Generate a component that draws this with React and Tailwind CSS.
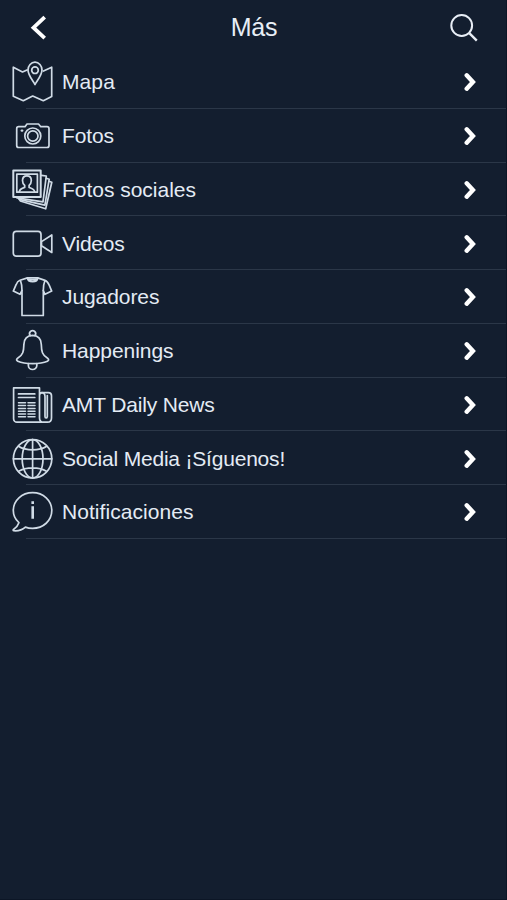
const stroke = {
  fill: 'none',
  stroke: 'currentColor',
  strokeWidth: 1.7,
  strokeLinejoin: 'round',
  strokeLinecap: 'round',
};

function Icon({ children }) {
  return (
    <svg viewBox="0 0 40 40" className="size-10 shrink-0 overflow-visible text-[#d0dbe6]" {...stroke} aria-hidden="true">
      {children}
    </svg>
  );
}

const MapIcon = () => (
  <Icon>
    <path d="M15 8 10.5 10 1.3 5.2V34.3L11.3 38.7 20.7 34 31.3 38.7 39.7 34.5V5.2L31.5 9" />
    <path d="M23 22.500c-2.300-4-7-9.500-7-14.500a7 7.800 0 0 1 14 0c0 5-4.700 10.500-7 14.500Z" />
    <circle cx="23" cy="8.200" r="3.300" />
  </Icon>
);

const CameraIcon = () => (
  <Icon>
    <path d="M6.700 10.700H13l2-2.700h11.500l2.300 2.700H35a2 2 0 0 1 2 2V29.500a2 2 0 0 1-2 2H6.700a2 2 0 0 1-2-2V12.700a2 2 0 0 1 2-2Z" />
    <circle cx="20.800" cy="20" r="8" />
    <circle cx="20.800" cy="20" r="5.200" />
    <path d="M9.800 14.600h.4" strokeWidth="2.400" />
  </Icon>
);

const SocialPhotosIcon = () => (
  <Icon>
    <path strokeWidth="2" d="M1.300.6H28.700V27H1.300Z" />
    <path d="M4.800 4.200H25.400V22.200H4.800Z" />
    <path d="M7.300 21.800c.3-3 2.800-3.500 5.400-4.400v-2c-1.500-1.400-2.200-3.200-2.200-5 0-2.800 1.800-4.500 4.400-4.500s4.400 1.700 4.400 4.500c0 1.800-.7 3.600-2.200 5v2c2.500.9 5.200 1.400 5.500 4.400" />
    <path d="M29.500 5.300 34.300 6 31 31.800 5 27.800" />
    <path d="M34.300 8.300 37.200 9.200 32.900 35.200 7 29.300" />
    <path d="M37 11.300 39.800 12.200 33.700 38.800 8.300 31 7.500 29" />
  </Icon>
);

const VideoIcon = () => (
  <Icon>
    <rect x="1.300" y="7.400" width="27.700" height="24.800" rx="3" />
    <path d="M29.500 17.600 39.800 11V28.500L29.500 21.700Z" />
  </Icon>
);

const ShirtIcon = () => (
  <Icon>
    <path d="M15.500.9h10.200l7.300 2.500c2.500.9 3.300 2.500 4.200 4.800l2.500 5.900-6.700 3.200-1.700-3.800V38.500H10V13.500l-2 3.800L1.300 14.100l2.800-6.400C5 5.300 6 4 8 3.300Z" />
    <path d="M15.500.9c.3 5 10 5 10.200 0M16 1.700c2.500 1.200 7 1.200 9.200 0M10 13.500c0-3 0-6-1.400-9.500M31.300 13.500c0-3 0-6 1.500-9.500" />
  </Icon>
);

const BellIcon = () => (
  <Icon>
    <path d="M18.300 4.600a3 3 0 1 1 4.600 0" />
    <path d="M20.600 4.400c-5.300.2-8.500 3.400-8.700 9-.2 7-.8 10.600-6.300 13.900-1.500 1.100-1.300 2.200.2 2.900 7 3.200 22.600 3.200 29.600 0 1.500-.7 1.700-1.800.2-2.900-5.500-3.300-6.100-6.900-6.300-13.900-.2-5.600-3.400-8.800-8.700-9Z" />
    <path d="M16.400 32.500v2.200a4.200 3.800 0 0 0 8.400 0v-2.200" />
  </Icon>
);

const NewsIcon = () => (
  <Icon>
    <path d="M34 37.200H5a3.400 3.400 0 0 1-3.400-3.400V2.900H27.500V33c0 2.500 1.700 4.200 4 4.200M27.500 10.500c0-2 1-2.800 2.800-2.800h6c2 0 3.200 1 3.200 3V33c0 2.500-1.500 4.200-4 4.200h-4" />
    <path d="M29.500 7.700c2.500 0 3.500 1.400 3.500 4V31.500c0 2 2 2 2.300 0V10.500" />
    <path d="M6.500 8.900H22.800M6.500 12.500H22.800" />
    <path strokeWidth="1.500" d="M6.500 17.800h7M6.500 20.600h7M6.500 23.400h7M6.500 26.200h7M6.500 29h7M6.500 31.800h7M16 17.800h7M16 20.600h7M16 23.400h7M16 26.200h7M16 29h7M16 31.800h7" />
  </Icon>
);

const GlobeIcon = () => (
  <Icon>
    <circle cx="20.600" cy="19.800" r="19.200" />
    <ellipse cx="20.600" cy="19.800" rx="10.400" ry="19.200" />
    <path d="M20.600.6V39M1.400 19.800H39.800M6.500 7.200c7.500 4.800 20.700 4.800 28.200 0M6.500 32.400c7.500-4.800 20.700-4.800 28.200 0" />
  </Icon>
);

const InfoIcon = () => (
  <Icon>
    <path d="M6.900 30.700C3.300 27.500 1.300 23.300 1.300 18.600 1.300 8.600 9.900.7 20.600.7s19.200 7.900 19.200 17.900-8.600 17.800-19.200 17.800c-2.500 0-5-.4-7.200-1.300-3 2.600-7.300 4-11.600 3.600-.7-.1-.8-.8-.3-1.200C3.900 35.800 6 33.500 6.900 30.700Z" />
    <path strokeLinecap="butt" strokeWidth="2.600" d="M20.700 9.300v2.800M20.700 14.300V26.800" />
  </Icon>
);

const items = [
  { label: 'Mapa', icon: MapIcon, tracking: 'tracking-[0.1px]' },
  { label: 'Fotos', icon: CameraIcon, tracking: 'tracking-[-0.1px]' },
  { label: 'Fotos sociales', icon: SocialPhotosIcon, tracking: 'tracking-[-0.02px]' },
  { label: 'Videos', icon: VideoIcon, tracking: 'tracking-[-0.2px]' },
  { label: 'Jugadores', icon: ShirtIcon, tracking: 'tracking-[-0.08px]' },
  { label: 'Happenings', icon: BellIcon, tracking: 'tracking-[-0.06px]' },
  { label: 'AMT Daily News', icon: NewsIcon, tracking: 'tracking-[-0.15px]' },
  { label: 'Social Media ¡Síguenos!', icon: GlobeIcon, tracking: 'tracking-[-0.2px]' },
  { label: 'Notificaciones', icon: InfoIcon, tracking: 'tracking-[0.05px]' },
];

function Chevron() {
  return (
    <svg viewBox="0 0 12 20" className="h-5 w-3 shrink-0 text-white" fill="none" stroke="currentColor" strokeWidth="4.400" strokeLinecap="round" aria-hidden="true">
      <path d="M2.700 3.300 8.900 10 2.700 16.700" />
    </svg>
  );
}

function Row({ label, icon: Glyph, tracking }) {
  return (
    <li className="flex h-[53.75px] flex-col">
      <a className="flex min-h-0 flex-1 items-center pl-3 pr-[30px] pt-[1.5px]">
        <Glyph />
        <span className={`ml-2.5 flex-1 whitespace-nowrap text-[21px] leading-6 text-[#e4ebf4] ${tracking}`}>{label}</span>
        <Chevron />
      </a>
      <div className="ml-[26px] h-px shrink-0 bg-[#2b3748]" />
    </li>
  );
}

export default function App() {
  return (
    <main className="flex h-[900px] w-[507px] flex-col overflow-hidden border-b border-r border-[#0c1626] bg-[#131e2f] font-['Liberation_Sans',Arial,sans-serif]">
      <header className="grid h-[55.200px] shrink-0 grid-cols-[1fr_auto_1fr] items-center pl-[30px] pr-7">
        <button aria-label="Atrás" className="justify-self-start text-white">
          <svg viewBox="0 0 17 26" className="block h-[26px] w-[17px]" fill="none" stroke="currentColor" strokeWidth="3.800">
            <path d="M14.700 2.200 3.500 12.700 14.700 23.200" />
          </svg>
        </button>
        <h1 className="pb-px text-[25px] leading-7 tracking-[-0.2px] text-[#e8eef6]">Más</h1>
        <button aria-label="Buscar" className="justify-self-end text-[#e8eef6]">
          <svg viewBox="0 0 28 28" className="block size-7" fill="none" stroke="currentColor" strokeWidth="2">
            <circle cx="11.700" cy="11.500" r="10.400" />
            <path strokeWidth="2.400" d="m19.300 19.200 7.500 7.500" />
          </svg>
        </button>
      </header>
      <ul className="flex flex-col">
        {items.map((item) => (
          <Row key={item.label} {...item} />
        ))}
      </ul>
    </main>
  );
}
